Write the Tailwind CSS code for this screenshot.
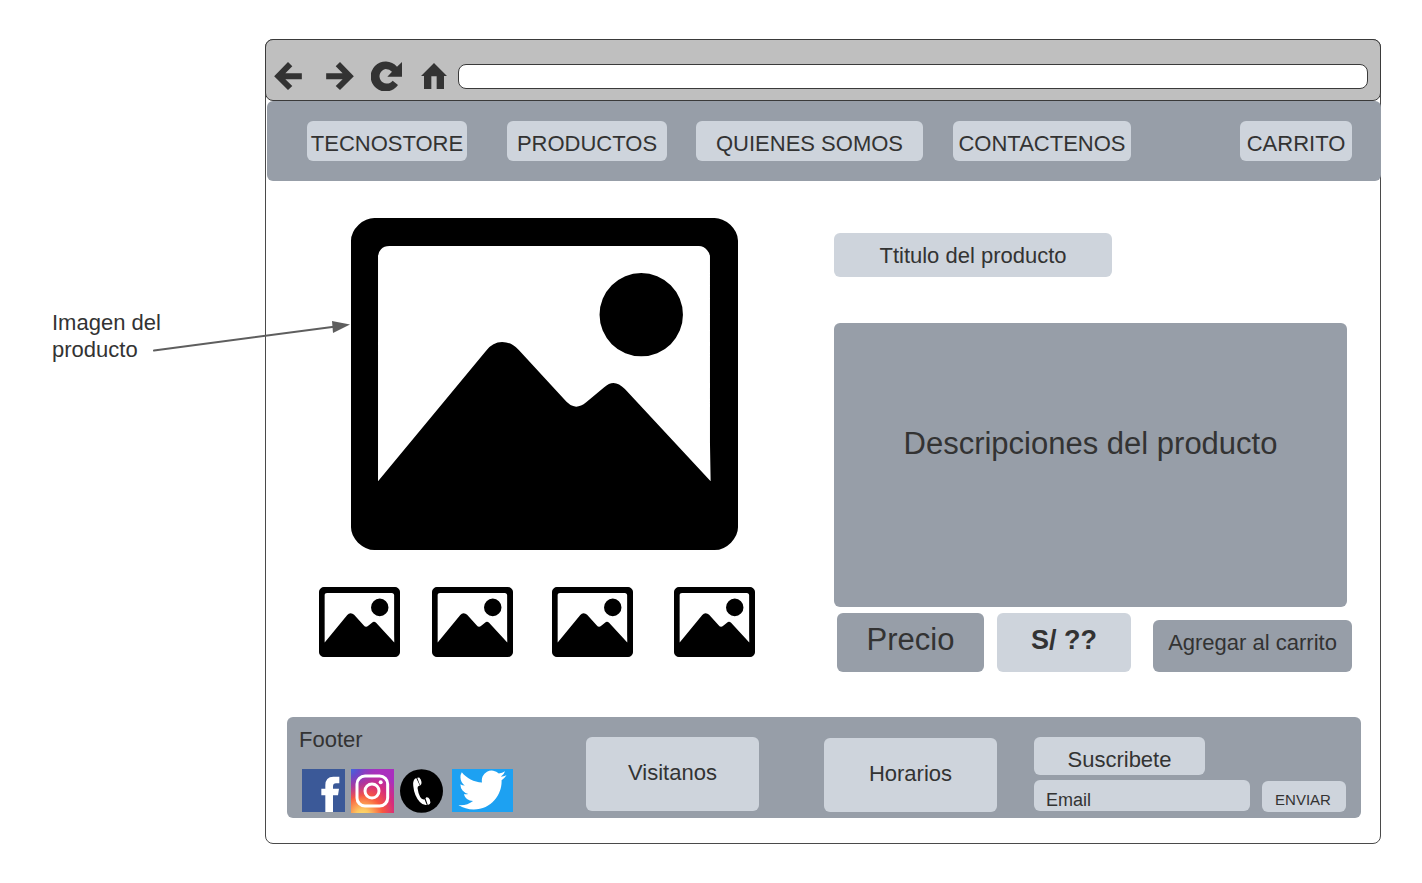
<!DOCTYPE html>
<html lang="es">
<head>
<meta charset="utf-8">
<meta name="viewport" content="width=device-width, initial-scale=1">
<title>Tecnostore - Producto</title>
<script src="https://cdn.jsdelivr.net/npm/@tailwindcss/browser@4"></script>
</head>
<body class="bg-white font-['Liberation_Sans',Arial,sans-serif] text-[22px] leading-[27px] text-[#333333]">
<svg class="hidden" aria-hidden="true">
  <symbol id="picture" viewBox="33 24 1160 996" preserveAspectRatio="none">
    <path fill-rule="evenodd" d="M103 24H1123Q1146 24 1170 44Q1193 66 1193 92V952Q1193 976 1172 998Q1150 1020 1123 1020H103Q78 1020 54 998Q33 976 33 952V92Q33 66 56 44Q78 24 103 24ZM148 108Q132 108 123 118Q114 127 114 140V814L438 422Q458 396 486 396Q514 396 536 420L672 568Q690 590 708 590Q722 590 738 577L792 532Q806 519 820 519Q836 519 854 537L1111 814L1109 700V140Q1109 130 1100 120Q1090 108 1076 108ZM1028 314A125 125 0 1 1 778 314A125 125 0 1 1 1028 314Z"/>
  </symbol>
</svg>

<div class="flex pt-[39px] pr-[41px] pb-[39px]">
  <aside class="relative w-[265px] shrink-0 pt-[270px] pl-13">
    <p class="w-[130px]">Imagen del producto</p>
    <svg class="absolute top-[270px] left-[150px] z-10 h-[60px] w-[202px]" viewBox="150 309 202 60" fill="#5e5e5e" aria-hidden="true">
      <path d="M154 350.5L334 326.8" stroke="#5e5e5e" stroke-width="2" stroke-linecap="round"/>
      <path d="M332 321L350 324.5L333 333Z"/>
    </svg>
  </aside>

  <div class="min-w-0 flex-1 rounded-lg border border-[#4a4a4a] pb-[25px]">
    <div class="-mx-px -mt-px flex h-[62px] items-center rounded-lg border border-[#3a3a3a] bg-[#bfbfbf] pt-3 pr-3 pl-2 text-[#333333]">
      <button class="mr-6" aria-label="Atrás"><svg class="size-7" viewBox="42 96 84 85" fill="currentColor"><path d="M42 139L84 96L97 109L76 130H126V148H76L97 169L84 181Z"/></svg></button>
      <button class="mr-[17px]" aria-label="Adelante"><svg class="size-7" viewBox="198 96 84 85" fill="currentColor"><path d="M282 139L240 96L227 109L248 130H198V148H248L227 169L240 181Z"/></svg></button>
      <button class="mr-[19px]" aria-label="Recargar"><svg class="h-[30px] w-[31px]" viewBox="333 93 93 90" fill="currentColor"><path d="M426 96V140H382L396 125Q389 117 377 117A22 22 0 1 0 398 152L414 165A45 45 0 1 1 411 110Z"/></svg></button>
      <button class="mr-[11px]" aria-label="Inicio"><svg class="h-[26px] w-[26px]" viewBox="483 99 78 78" fill="currentColor"><path d="M522 99L561 138H552V177H530V139H514V177H492V138H483Z"/></svg></button>
      <input type="text" aria-label="Dirección" class="h-[25px] min-w-0 flex-1 rounded-lg border border-[#3a3a3a] bg-white px-2 text-base">
    </div>

    <nav class="-mr-px ml-px flex h-20 items-center rounded-md bg-[#979ea8] pr-[29px] pl-10">
      <a href="#" class="h-10 w-40 rounded-md bg-[#ced4dc] pt-[9px] text-center">TECNOSTORE</a>
      <a href="#" class="ml-10 h-10 w-40 rounded-md bg-[#ced4dc] pt-[9px] text-center">PRODUCTOS</a>
      <a href="#" class="ml-[29px] h-10 w-[227px] rounded-md bg-[#ced4dc] pt-[9px] text-center">QUIENES SOMOS</a>
      <a href="#" class="ml-[30px] h-10 w-[178px] rounded-md bg-[#ced4dc] pt-[9px] text-center">CONTACTENOS</a>
      <a href="#" class="ml-auto h-10 w-28 rounded-md bg-[#ced4dc] pt-[9px] text-center">CARRITO</a>
    </nav>

    <main class="flex pr-7 pl-[53px]">
      <section class="w-[436px] shrink-0 pt-[37px]" aria-label="Imágenes del producto">
        <svg class="mx-8 h-[332px] w-[387px]" role="img" aria-label="Imagen del producto"><use href="#picture"/></svg>
        <div class="flex pt-[37px]">
          <button aria-label="Imagen 1"><svg class="h-[70px] w-[81px]"><use href="#picture"/></svg></button>
          <button class="ml-8" aria-label="Imagen 2"><svg class="h-[70px] w-[81px]"><use href="#picture"/></svg></button>
          <button class="ml-[39px]" aria-label="Imagen 3"><svg class="h-[70px] w-[81px]"><use href="#picture"/></svg></button>
          <button class="ml-[41px]" aria-label="Imagen 4"><svg class="h-[70px] w-[81px]"><use href="#picture"/></svg></button>
        </div>
      </section>
      <section class="ml-[79px] flex min-w-0 flex-1 flex-col pt-[52px]">
        <h1 class="h-11 w-[278px] rounded-md bg-[#ced4dc] pt-[9px] text-center">Ttitulo del producto</h1>
        <div class="mt-[46px] mr-[5px] flex h-[284px] items-center justify-center rounded-md bg-[#979ea8] pb-[42px] text-[31px] leading-10">Descripciones del producto</div>
        <div class="mt-[6px] ml-[3px] flex items-end">
          <div class="h-[59px] w-[147px] rounded-md bg-[#979ea8] pt-[7px] text-center text-[31px] leading-10">Precio</div>
          <div class="ml-[13px] h-[59px] w-[134px] rounded-md bg-[#ced4dc] pt-[7px] text-center text-[27px] leading-10 font-bold">S/ ??</div>
          <button class="ml-auto h-[52px] w-[199px] rounded-md bg-[#979ea8] pb-2">Agregar al carrito</button>
        </div>
      </section>
    </main>

    <footer class="mt-[45px] mr-[19px] ml-[21px] flex h-[101px] items-start rounded-md bg-[#979ea8] pr-[15px] pl-3">
      <div class="w-[287px] pt-[9px]">
        <p>Footer</p>
        <div class="ml-[3px] flex pt-4">
          <a href="#" aria-label="Facebook"><svg class="h-[43px] w-[43px]" viewBox="36 177 129 129"><path fill="#3b5998" d="M36 177h129v129H36z"/><path fill="#fff" d="M106 306V256H94V236H106V226Q106 200 130 200H148V220H138Q129 220 129 230V236H147L144 256H129V306Z"/></svg></a>
          <a href="#" class="ml-1.5" aria-label="Instagram"><svg class="h-11 w-[43px]" viewBox="183 177 129 132">
            <defs>
              <radialGradient id="warm" cx="0.27" cy="1.07" r="1.05"><stop offset="0" stop-color="#ffdd70"/><stop offset=".15" stop-color="#fdc860"/><stop offset=".45" stop-color="#f9593f"/><stop offset=".72" stop-color="#d62d7c"/><stop offset="1" stop-color="#a92fbe"/></radialGradient>
              <radialGradient id="cool" cx="0" cy="0" r=".7"><stop offset="0" stop-color="#4068dc"/><stop offset=".25" stop-color="#5a4fd0" stop-opacity=".85"/><stop offset="1" stop-color="#a030c0" stop-opacity="0"/></radialGradient>
            </defs>
            <path fill="url(#warm)" d="M183 177h129v132H183z"/><path fill="url(#cool)" d="M183 177h129v132H183z"/>
            <g fill="none" stroke="#fff" stroke-width="9"><rect x="201" y="198" width="92" height="90" rx="24"/><circle cx="246" cy="243" r="21"/></g><circle cx="272" cy="217" r="6" fill="#fff"/></svg></a>
          <a href="#" class="ml-1.5" aria-label="Teléfono"><svg class="h-11 w-[43px]" viewBox="0 0 130 132"><ellipse cx="65" cy="66" rx="65" ry="66"/><g fill="#fff"><path d="M49 27Q38 32 40 50Q43 81 60 99Q70 110 81 108L74 91Q66 93 61 84Q55 73 53 57Q52 51 60 49Z"/><path d="M52 26L58 25Q64 30 65 39Q66 48 61 49ZM77 88L80 85Q86 84 90 92L92 101Q92 106 84 108Z"/></g></svg></a>
          <a href="#" class="ml-[9px]" aria-label="Twitter"><svg class="h-[43px] w-[61px]" viewBox="0 0 61 43"><path fill="#1da1f2" d="M0 0h61v43H0z"/><path fill="#fff" transform="translate(6.5 -3) scale(2)" d="M23.953 4.57a10 10 0 01-2.825.775 4.958 4.958 0 002.163-2.723c-.951.555-2.005.959-3.127 1.184a4.92 4.92 0 00-8.384 4.482C7.69 8.095 4.067 6.13 1.64 3.162a4.822 4.822 0 00-.666 2.475c0 1.71.87 3.213 2.188 4.096a4.904 4.904 0 01-2.228-.616v.06a4.923 4.923 0 003.946 4.827 4.996 4.996 0 01-2.212.085 4.936 4.936 0 004.604 3.417 9.867 9.867 0 01-6.102 2.105c-.39 0-.779-.023-1.17-.067a13.995 13.995 0 007.557 2.209c9.053 0 13.998-7.496 13.998-13.985 0-.21 0-.42-.015-.63A9.935 9.935 0 0024 4.59z"/></svg></a>
        </div>
      </div>
      <a href="#" class="mt-5 h-[74px] w-[173px] rounded-md bg-[#ced4dc] pt-[22px] text-center">Visitanos</a>
      <a href="#" class="mt-[21px] ml-[65px] h-[74px] w-[173px] rounded-md bg-[#ced4dc] pt-[22px] text-center">Horarios</a>
      <form class="ml-[37px] min-w-0 flex-1 pt-5">
        <label for="email" class="block h-[38px] w-[171px] rounded-md bg-[#ced4dc] pt-[9px] text-center">Suscribete</label>
        <div class="flex pt-[5px]">
          <input id="email" type="email" placeholder="Email" class="h-[31px] min-w-0 flex-1 rounded-md bg-[#ced4dc] px-3 pt-2.5 text-lg leading-5 placeholder:text-[#333333]">
          <button type="button" class="mt-px ml-3 h-[31px] w-[84px] rounded-md bg-[#ced4dc] pt-1.5 pr-0.5 text-[15px] leading-6">ENVIAR</button>
        </div>
      </form>
    </footer>
  </div>
</div>
</body>
</html>
